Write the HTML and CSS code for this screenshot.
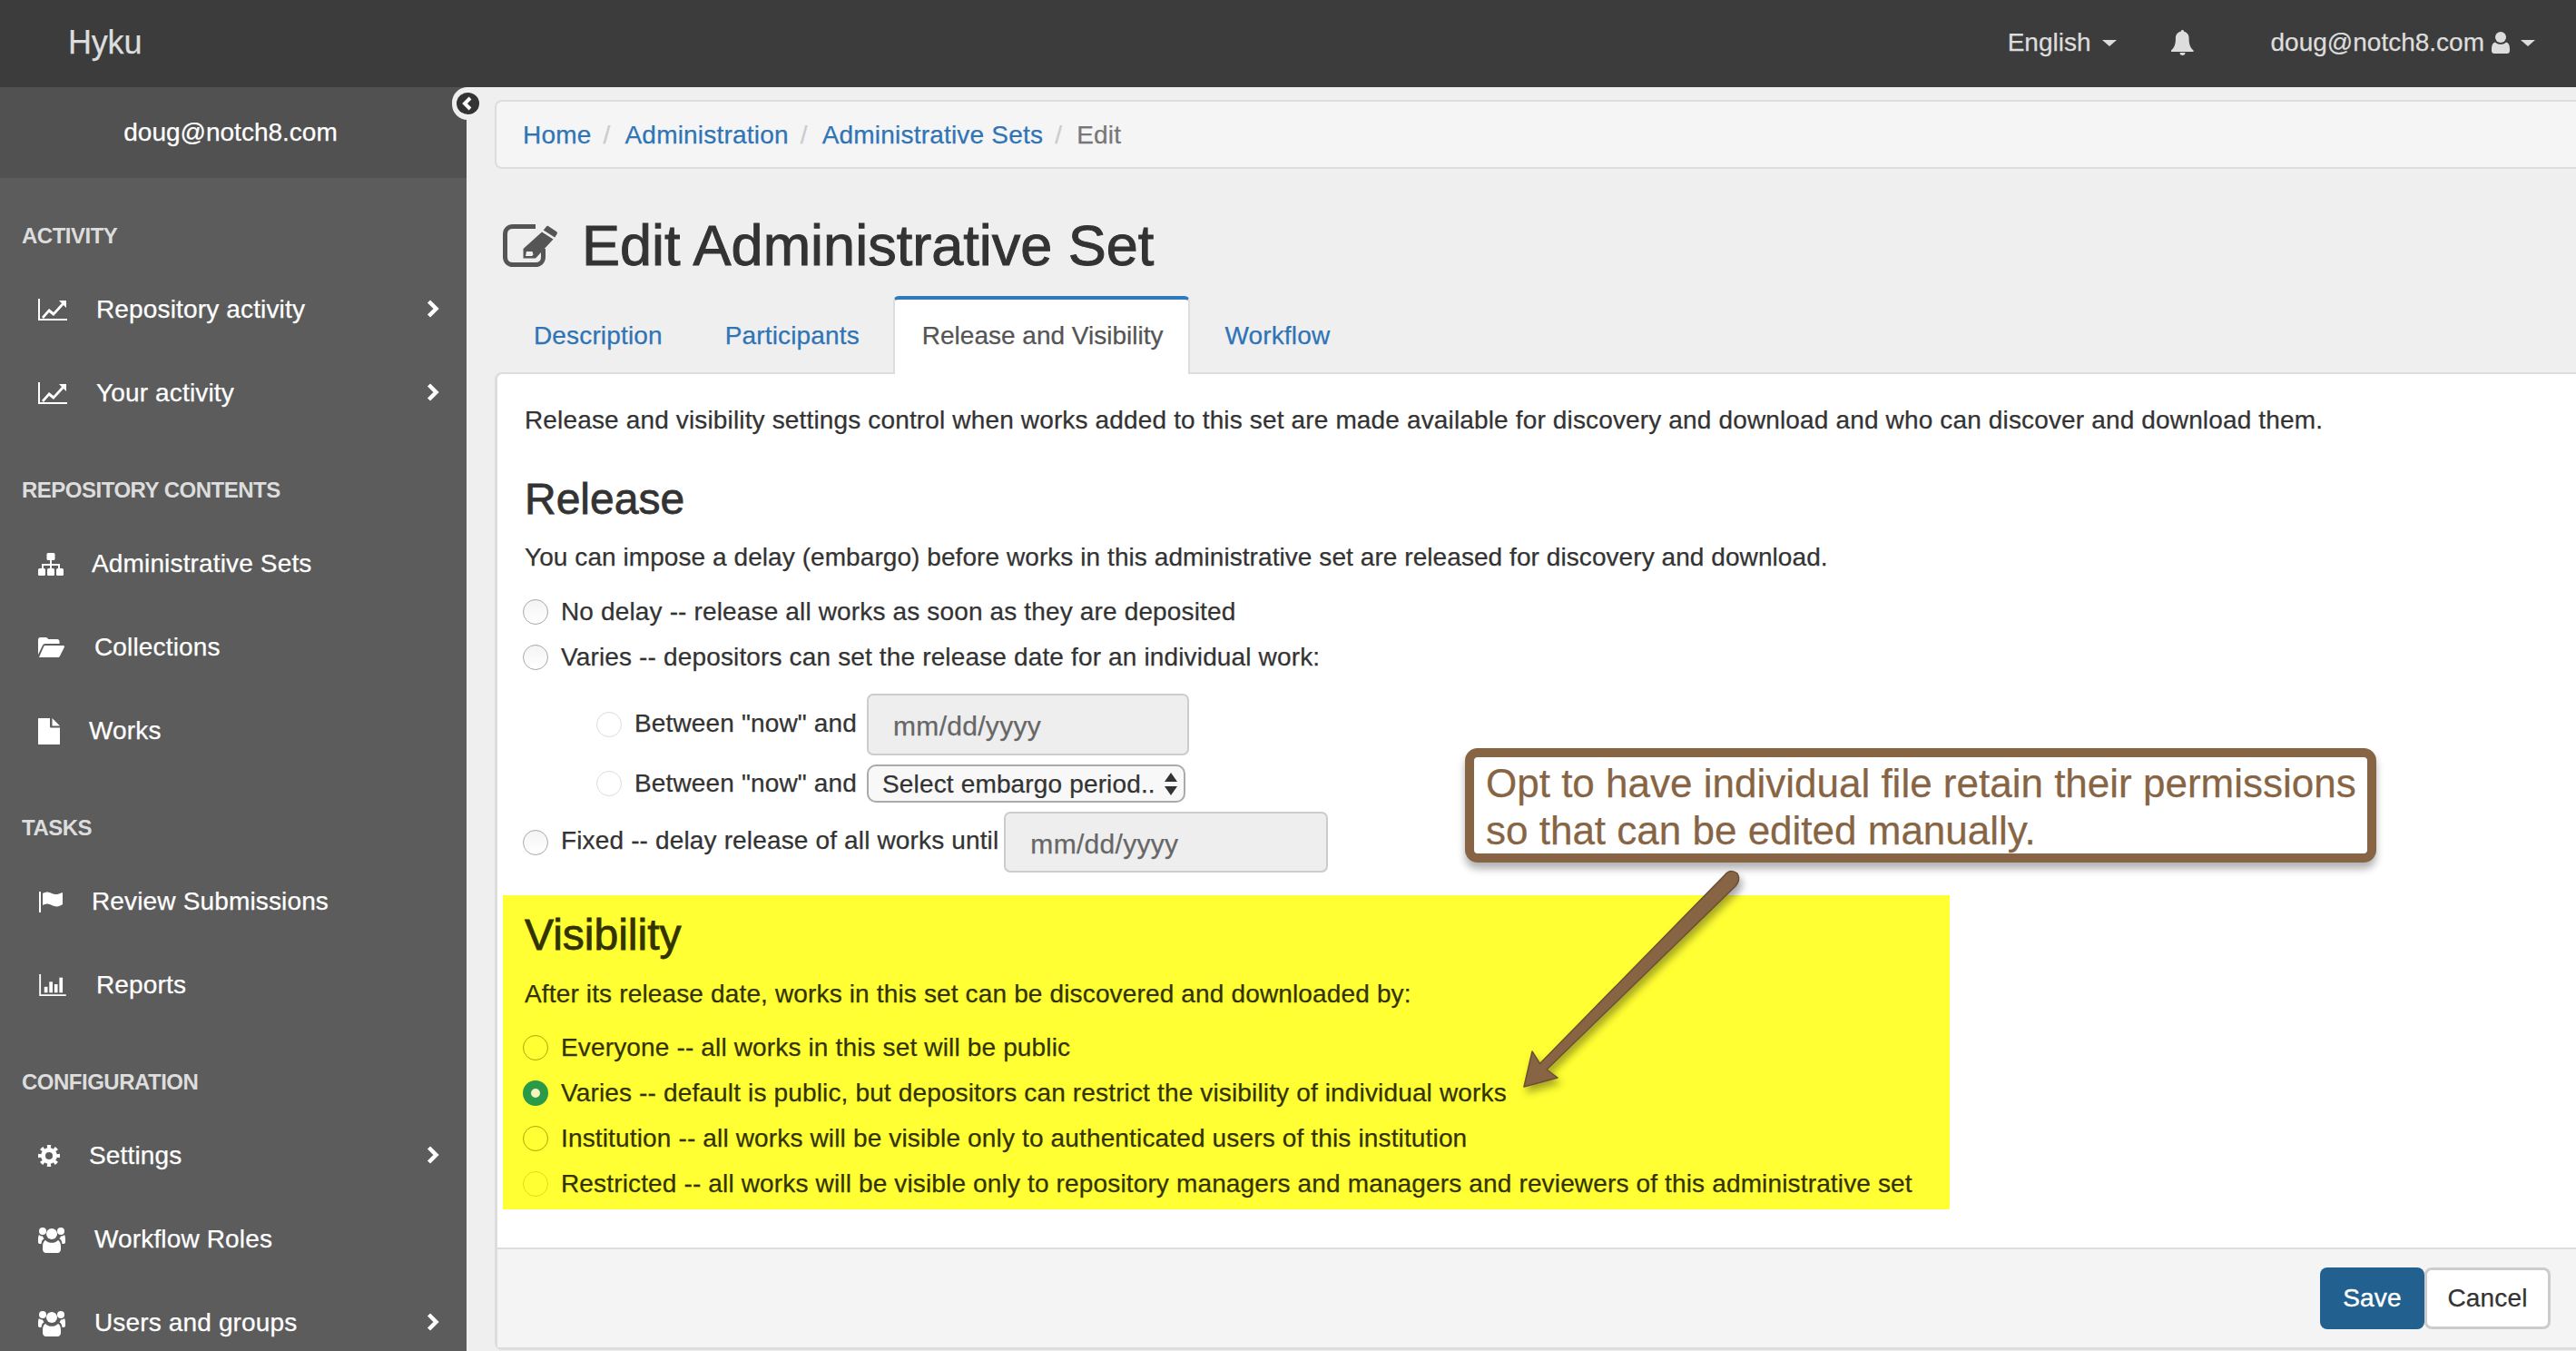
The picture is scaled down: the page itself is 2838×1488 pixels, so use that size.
FILE: index.html
```html
<!DOCTYPE html>
<html lang="en">
<head>
    <meta charset="UTF-8">
    <title>Edit Administrative Set</title>
    <link rel="stylesheet" href="styles.css">
</head>
<body>

    <header class="navbar">
        <a class="brand">Hyku</a>
        <nav class="nav-right">
            <span class="nav-lang">English <i class="caret"></i></span>
            <svg class="nav-bell" viewBox="0 0 25 28"><path d="M12.5 0c1 0 1.5.7 1.5 1.7 3.6.7 5.6 3.6 5.6 7.5 0 6 1.2 10 4.9 13.3.6.6.2 1.5-.6 1.5H.6c-.8 0-1.2-.9-.6-1.5 3.7-3.3 4.9-7.300 4.900-13.300 0-3.900 2-6.800 5.600-7.500C11 .7 11.500 0 12.500 0zM9.500 25h6c0 1.700-1.300 3-3 3s-3-1.300-3-3z"/></svg>
            <span class="nav-user">doug@notch8.com
                <svg class="nav-user-icon" viewBox="0 0 20 24"><circle cx="10" cy="6" r="6"/><path d="M4 11.500c1.500 1.500 3.500 2.300 6 2.300s4.500-.8 6-2.300c2.600.5 4 3 4 7.500v2c0 2-1.300 3-3 3H3c-1.700 0-3-1-3-3v-2c0-4.500 1.400-7 4-7.500z"/></svg>
                <i class="caret"></i>
            </span>
        </nav>
    </header>

    <div class="page">
        <aside class="sidebar">
            <div class="sidebar-user">doug@notch8.com</div>

            <h4 class="side-heading">ACTIVITY</h4>
            <a class="side-item">
                <svg class="ico ico-chart" viewBox="0 0 32 24"><path class="line" d="M1 0V23H32"/><path d="M4 20l8-9 5 4 9-10-3-3h8v8l-3-3-11 12-5-4-6 7z"/></svg>
                Repository activity
                <svg class="chev" viewBox="0 0 14 20"><path d="M2.500 2l8 8-8 8"/></svg>
            </a>
            <a class="side-item">
                <svg class="ico ico-chart" viewBox="0 0 32 24"><path class="line" d="M1 0V23H32"/><path d="M4 20l8-9 5 4 9-10-3-3h8v8l-3-3-11 12-5-4-6 7z"/></svg>
                Your activity
                <svg class="chev" viewBox="0 0 14 20"><path d="M2.500 2l8 8-8 8"/></svg>
            </a>

            <h4 class="side-heading">REPOSITORY CONTENTS</h4>
            <a class="side-item">
                <svg class="ico ico-sitemap" viewBox="0 0 28 25"><rect x="9.500" width="9" height="8" rx="1.500"/><path d="M13 8h2v4h9v5h-2v-3h-7v3h-2v-3H6v3H4v-5h9z"/><rect y="17" width="8" height="8" rx="1.500"/><rect x="10" y="17" width="8" height="8" rx="1.500"/><rect x="20" y="17" width="8" height="8" rx="1.500"/></svg>
                Administrative Sets
            </a>
            <a class="side-item">
                <svg class="ico ico-folder" viewBox="0 0 29 22"><path d="M0 2.500C0 1 1 0 2.500 0h6C10 0 11 1 11 2h10c1.500 0 2.500 1 2.500 2.500V7H8c-1.500 0-2.500.7-3 1.800L0 19z"/><path d="M8 9h19.500c1.200 0 1.800 1 1.300 2L24 20.500c-.5 1-1.500 1.500-2.500 1.500H1l5-11.500C6.400 9.500 7 9 8 9z"/></svg>
                Collections
            </a>
            <a class="side-item">
                <svg class="ico ico-file" viewBox="0 0 24 29"><path d="M1 0h12v9c0 1 .7 1.500 1.500 1.500H24V28c0 .6-.4 1-1 1H1c-.6 0-1-.4-1-1V1c0-.6.4-1 1-1z"/><path d="M15.500 0L24 8.500h-8.500z"/></svg>
                Works
            </a>

            <h4 class="side-heading">TASKS</h4>
            <a class="side-item">
                <svg class="ico ico-flag" viewBox="0 0 27 24"><rect x="1" y="1" width="2" height="23"/><path d="M5 3c3-2 6-2 10 0s7 1 12-1v13c-4 3-8 3-12 1s-7-2-10 0z"/></svg>
                Review Submissions
            </a>
            <a class="side-item">
                <svg class="ico ico-chart" viewBox="0 0 32 26"><path class="line" d="M1 0V25H32"/><rect x="6" y="15" width="4" height="7"/><rect x="12" y="9" width="4" height="13"/><rect x="18" y="12" width="4" height="10"/><rect x="24" y="4" width="4" height="18"/></svg>
                Reports
            </a>

            <h4 class="side-heading">CONFIGURATION</h4>
            <a class="side-item">
                <svg class="ico ico-cog" viewBox="0 0 24 24"><circle class="cog-ring" cx="12" cy="12" r="6.500"/><circle class="cog-teeth" cx="12" cy="12" r="10" pathLength="32" transform="rotate(-11.250 12 12)"/></svg>
                Settings
                <svg class="chev" viewBox="0 0 14 20"><path d="M2.500 2l8 8-8 8"/></svg>
            </a>
            <a class="side-item">
                <svg class="ico ico-users" viewBox="0 0 30 29"><circle cx="15" cy="8" r="6"/><circle cx="5" cy="5" r="4"/><circle cx="25" cy="5" r="4"/><path d="M8 15c2 2 4.500 2.800 7 2.800s5-.8 7-2.800c1.500.5 3 3 3 7v3c0 2-1.500 4-3.500 4h-13C6.500 29 5 27 5 25v-3c0-4 1.500-6.500 3-7z"/><path d="M1 9c1 1 2.500 1.500 4 1.500.2 1 .8 2 1.600 2.800C4.500 14.500 3.700 16.500 3.500 19H2c-1.200 0-2-.8-2-2v-3c0-2 .3-4 1-5z"/><path d="M29 9c-1 1-2.500 1.500-4 1.500-.2 1-.8 2-1.600 2.800 2.100 1.200 2.900 3.200 3.100 5.700H28c1.200 0 2-.8 2-2v-3c0-2-.3-4-1-5z"/></svg>
                Workflow Roles
            </a>
            <a class="side-item">
                <svg class="ico ico-users" viewBox="0 0 30 29"><circle cx="15" cy="8" r="6"/><circle cx="5" cy="5" r="4"/><circle cx="25" cy="5" r="4"/><path d="M8 15c2 2 4.500 2.800 7 2.800s5-.8 7-2.800c1.500.5 3 3 3 7v3c0 2-1.500 4-3.500 4h-13C6.500 29 5 27 5 25v-3c0-4 1.500-6.500 3-7z"/><path d="M1 9c1 1 2.500 1.500 4 1.500.2 1 .8 2 1.600 2.800C4.500 14.500 3.700 16.500 3.500 19H2c-1.200 0-2-.8-2-2v-3c0-2 .3-4 1-5z"/><path d="M29 9c-1 1-2.500 1.500-4 1.500-.2 1-.8 2-1.600 2.800 2.100 1.200 2.900 3.200 3.100 5.700H28c1.200 0 2-.8 2-2v-3c0-2-.3-4-1-5z"/></svg>
                Users and groups
                <svg class="chev" viewBox="0 0 14 20"><path d="M2.500 2l8 8-8 8"/></svg>
            </a>
        </aside>

        <main class="content">
            <ol class="breadcrumb">
                <li><a>Home</a></li>
                <li><a>Administration</a></li>
                <li><a>Administrative Sets</a></li>
                <li class="active">Edit</li>
            </ol>

            <h1 class="page-title">
                <svg class="title-icon" viewBox="0 0 61 47"><path class="title-box" d="M36 2.500H11C6 2.500 2.500 6 2.500 11v25c0 5 3.500 8.500 8.500 8.500h25c5 0 8.500-3.500 8.500-8.500V27"/><path d="M50 2l9 6c1 .7 1.200 1.800.6 2.700l-2.400 3.800-12.500-8L48 2.500c.5-.8 1.200-1 2-.5zM43 8.500l12.500 8L36 37.500H22.500V27zM26 30l-1 5h7l1.500-1.600-1-3.400z"/></svg>
                Edit Administrative Set
            </h1>

            <ul class="tabs">
                <li><a>Description</a></li>
                <li><a>Participants</a></li>
                <li class="active"><a>Release and Visibility</a></li>
                <li><a>Workflow</a></li>
            </ul>

            <section class="panel">
                <div class="panel-body">
                    <p class="intro">Release and visibility settings control when works added to this set are made available for discovery and download and who can discover and download them.</p>

                    <h2 class="sub-title">Release</h2>
                    <p class="lead">You can impose a delay (embargo) before works in this administrative set are released for discovery and download.</p>

                    <label class="radio-row"><input type="radio" name="release"> No delay -- release all works as soon as they are deposited</label>
                    <label class="radio-row"><input type="radio" name="release"> Varies -- depositors can set the release date for an individual work:</label>

                    <div class="embargo-row embargo-date">
                        <input type="radio" name="varies" disabled>
                        <span class="embargo-label">Between "now" and</span>
                        <input class="date-input" type="text" placeholder="mm/dd/yyyy" disabled>
                    </div>
                    <div class="embargo-row embargo-period">
                        <input type="radio" name="varies" disabled>
                        <span class="embargo-label">Between "now" and</span>
                        <span class="select-wrap">
                            <select disabled><option>Select embargo period..</option></select>
                        </span>
                    </div>
                    <div class="fixed-row">
                        <input type="radio" name="release">
                        <span class="fixed-label">Fixed -- delay release of all works until</span>
                        <input class="date-input" type="text" placeholder="mm/dd/yyyy" disabled>
                    </div>

                    <div class="visibility">
                        <h2 class="sub-title">Visibility</h2>
                        <p class="lead">After its release date, works in this set can be discovered and downloaded by:</p>
                        <label class="radio-row"><input type="radio" name="vis"> Everyone -- all works in this set will be public</label>
                        <label class="radio-row"><input type="radio" name="vis" checked> Varies -- default is public, but depositors can restrict the visibility of individual works</label>
                        <label class="radio-row"><input type="radio" name="vis"> Institution -- all works will be visible only to authenticated users of this institution</label>
                        <label class="radio-row"><input type="radio" name="vis" disabled> Restricted -- all works will be visible only to repository managers and managers and reviewers of this administrative set</label>
                    </div>
                </div>
                <div class="panel-footer">
                    <button class="btn btn-primary">Save</button>
                    <button class="btn btn-default">Cancel</button>
                </div>
            </section>
        </main>
    </div>

    <!-- things lying over the page -->
    <div class="collapse-tab">
        <span class="collapse-dot">
            <svg viewBox="0 0 24 24"><path d="M14.500 6l-6 6 6 6"/></svg>
        </span>
    </div>

    <div class="callout">Opt to have individual file retain their permissions<br>so that can be edited manually.</div>

    <svg class="callout-arrow" viewBox="1660 950 270 260">
        <path d="M1900 964Q1906 956 1914 962Q1918 969 1912 976L1704 1178L1716 1187L1679 1197L1688 1158L1696.500 1171.500Z"/>
    </svg>

</body>
</html>
```

FILE: styles.css
```css
* {
    box-sizing: border-box;
}
html, body {
    margin: 0;
    height: 1488px;
    overflow: hidden;
}
body {
    position: relative;
    font-family: "Liberation Sans", Arial, sans-serif;
    font-size: 28px;
    color: #333;
    background: #efefef;
    -webkit-text-stroke: 0.25px currentColor;
}
a {
    color: #2f74b5;
    text-decoration: none;
}

/* top bar */
.navbar {
    height: 96px;
    background: #3c3c3c;
    color: #ddd;
    display: flex;
    align-items: center;
    justify-content: space-between;
    padding: 0 45px 2px 75px;
}
.brand {
    font-size: 36px;
    color: #ddd;
    letter-spacing: -0.2px;
}
.nav-right {
    display: flex;
    align-items: center;
}
.nav-lang, .nav-user {
    display: flex;
    align-items: center;
}
.caret {
    display: inline-block;
    width: 0;
    height: 0;
    border-top: 7px solid #ddd;
    border-left: 8px solid transparent;
    border-right: 8px solid transparent;
    margin-left: 12px;
}
.nav-bell {
    width: 25px;
    height: 28px;
    fill: #ddd;
    margin: 0 85px 0 60px;
}
.nav-user-icon {
    width: 20px;
    height: 24px;
    fill: #ddd;
    margin-left: 8px;
}

/* sidebar */
.page {
    display: flex;
    height: 1392px;
}
.sidebar {
    width: 514px;
    flex: none;
    background: #5c5c5c;
    overflow: hidden;
}
.sidebar-user {
    height: 100px;
    background: #515151;
    color: #fff;
    display: flex;
    align-items: center;
    justify-content: center;
    padding-right: 6px;
}
.side-heading {
    margin: 47px 0 19px 24px;
    font-size: 24px;
    line-height: 30px;
    font-weight: bold;
    color: #ddd;
    letter-spacing: -0.5px;
    -webkit-text-stroke: 0;
}
.sidebar-user + .side-heading {
    margin-top: 49px;
}
.side-item {
    height: 92px;
    display: flex;
    align-items: center;
    padding: 2px 0 0 42px;
    color: #fff;
    position: relative;
    letter-spacing: 0.15px;
}
.ico {
    fill: #fff;
    flex: none;
    margin-right: 32px;
}
.ico .line {
    fill: none;
    stroke: #fff;
    stroke-width: 2;
}
.ico-chart { width: 32px; height: 24px; }
.ico-sitemap { width: 28px; height: 25px; margin-right: 31px; }
.ico-folder { width: 29px; height: 22px; margin-right: 33px; }
.ico-file { width: 24px; height: 29px; }
.ico-flag { width: 27px; height: 24px; }
.ico-cog { width: 24px; height: 24px; }
.ico-users { width: 30px; height: 29px; }
.cog-ring {
    fill: none;
    stroke: #fff;
    stroke-width: 5;
}
.cog-teeth {
    fill: none;
    stroke: #fff;
    stroke-width: 4;
    stroke-dasharray: 2 2;
}
.chev {
    position: absolute;
    left: 470px;
    top: 36px;
    width: 14px;
    height: 20px;
    fill: none;
    stroke: #fff;
    stroke-width: 4.500;
}

/* main column */
.content {
    flex: 1;
    min-width: 0;
    padding-left: 31px;
    display: flex;
    flex-direction: column;
    letter-spacing: 0.15px;
}
.breadcrumb {
    list-style: none;
    margin: 14px 0 0;
    height: 76px;
    padding: 2px 0 0 29px;
    display: flex;
    align-items: center;
    background: #f5f5f5;
    border: 2px solid #ddd;
    border-right: 0;
    border-radius: 8px 0 0 8px;
    letter-spacing: 0.2px;
}
.breadcrumb li + li::before {
    content: "/";
    color: #ccc;
    padding: 0 16px 0 13px;
}
.breadcrumb .active {
    color: #777;
}
.page-title {
    margin: 48px 0 0 9px;
    height: 72px;
    display: flex;
    align-items: center;
    font-size: 63px;
    font-weight: normal;
    letter-spacing: 0;
    -webkit-text-stroke: 1px #333;
    white-space: nowrap;
}
.title-icon {
    width: 61px;
    height: 47px;
    fill: #555;
    margin-right: 26px;
}
.title-box {
    fill: none;
    stroke: #555;
    stroke-width: 5;
}
.tabs {
    list-style: none;
    margin: 20px 0 -2px 12px;
    padding: 0;
    height: 86px;
    display: flex;
    gap: 7px;
    position: relative;
    z-index: 1;
}
.tabs a {
    display: block;
    height: 86px;
    line-height: 88px;
    padding: 0 29px;
    border: 2px solid transparent;
    border-width: 0 2px;
}
.tabs .active {
    margin-left: -1px;
}
.tabs .active a {
    color: #555;
    background: #fff;
    line-height: 80px;
    letter-spacing: 0;
    padding: 0 28px 0 30px;
    border-color: #ddd;
    border-top: 4px solid #2f7abd;
    border-radius: 6px 6px 0 0;
}
.panel {
    flex: 1;
    display: flex;
    flex-direction: column;
    margin-bottom: 1px;
    background: #fff;
    border: solid #ddd;
    border-width: 2px 0 3px 3px;
    border-radius: 8px 0 0 8px;
    min-height: 0;
}
.panel-body {
    flex: 1;
    padding: 31px 0 0 30px;
    min-height: 0;
}
.intro, .lead {
    margin: 0;
    line-height: 40px;
}
.panel-body > .lead {
    letter-spacing: 0.07px;
}
.sub-title {
    margin: 37px 0 14px;
    font-size: 48px;
    line-height: 60px;
    font-weight: normal;
    letter-spacing: 0;
    -webkit-text-stroke: 0.8px currentColor;
}
.radio-row {
    display: flex;
    align-items: center;
    height: 50px;
    white-space: nowrap;
}
.lead + .radio-row {
    margin-top: 15px;
}
input[type="radio"] {
    appearance: none;
    width: 28px;
    height: 28px;
    margin: 0 14px 0 -2px;
    flex: none;
    border-radius: 50%;
    border: 1.500px solid #a9a9a9;
    background: linear-gradient(#f4f4f4, #fff);
}
input[type="radio"]:disabled {
    border-color: #dcdcdc;
    background: #fff;
}
.embargo-row, .fixed-row {
    display: flex;
    align-items: center;
    white-space: nowrap;
}
.embargo-row {
    padding-left: 81px;
}
.embargo-date {
    margin-top: 15px;
    height: 68px;
}
.embargo-date .embargo-label, .fixed-label {
    padding-bottom: 3px;
}
.embargo-period {
    margin-top: 10px;
    height: 42px;
}
.fixed-row {
    margin-top: 10px;
    height: 67px;
}
.embargo-label {
    margin-right: 11px;
}
.fixed-label {
    margin-right: 6px;
}
.date-input {
    width: 355px;
    height: 100%;
    padding: 4px 26px 0 27px;
    font: inherit;
    font-size: 30px;
    letter-spacing: 0.3px;
    background: #eee;
    border: 2px solid #ccc;
    border-radius: 7px;
}
.date-input::placeholder {
    color: #666;
    opacity: 1;
}
.fixed-row .date-input {
    width: 357px;
}
.select-wrap {
    position: relative;
    display: block;
    width: 351px;
    height: 42px;
}
.select-wrap::before, .select-wrap::after {
    content: "";
    position: absolute;
    right: 9px;
    border-left: 7px solid transparent;
    border-right: 7px solid transparent;
}
.select-wrap::before {
    top: 9px;
    border-bottom: 10px solid #333;
}
.select-wrap::after {
    bottom: 8px;
    border-top: 10px solid #333;
}
.select-wrap select {
    appearance: none;
    width: 100%;
    height: 100%;
    padding: 0 0 0 15px;
    font: inherit;
    letter-spacing: inherit;
    color: #333;
    opacity: 1;
    background: #f8f8f8;
    border: 2px solid #aaa;
    border-radius: 10px;
}

/* yellow highlight, the grey of the form multiplies into olive here */
.visibility {
    width: 1594px;
    margin: 25px 0 0 -24px;
    padding: 14px 0 3px 24px;
    background: #ffff33;
    color: #333300;
}
.visibility .sub-title {
    margin: 0 0 15px;
}
.visibility .lead + .radio-row {
    margin-top: 14px;
}
.visibility input[type="radio"] {
    background: transparent;
    border-color: #a8a800;
}
.visibility input[type="radio"]:disabled {
    border-color: #dede10;
}
.visibility input[type="radio"]:checked {
    border: 9px solid #2a9a48;
    background: #f4f4c0;
}

.panel-footer {
    height: 110px;
    flex: none;
    display: flex;
    justify-content: flex-end;
    align-items: flex-start;
    padding: 20px 28px 0 0;
    background: #f4f4f4;
    border-top: 2px solid #ddd;
}
.btn {
    height: 68px;
    padding: 0;
    font: inherit;
    letter-spacing: inherit;
    border-radius: 8px;
}
.btn-primary {
    width: 115px;
    color: #fff;
    background: #22608f;
    border: 0;
    -webkit-text-stroke: 0.4px #fff;
}
.btn-default {
    width: 139px;
    color: #333;
    background: #fff;
    border: 3px solid #ccc;
}

/* overlays */
.collapse-tab {
    position: absolute;
    left: 498px;
    top: 96px;
    width: 34px;
    height: 36px;
    background: #efefef;
    border-radius: 18px 0 18px 18px;
    display: flex;
    align-items: center;
    padding-left: 5px;
}
.collapse-dot {
    width: 25px;
    height: 24px;
    border-radius: 50%;
    background: #333;
    display: block;
}
.collapse-dot svg {
    display: block;
    width: 25px;
    height: 24px;
    fill: none;
    stroke: #fff;
    stroke-width: 4;
}
.callout {
    position: absolute;
    left: 1614px;
    top: 824px;
    width: 1004px;
    height: 126px;
    padding: 3px 0 0 13px;
    background: #fff;
    border: 10px solid #876544;
    border-radius: 14px;
    box-shadow: 0 7px 8px rgba(0, 0, 0, 0.3);
    color: #876544;
    font-size: 44px;
    line-height: 52px;
    white-space: nowrap;
}
.callout-arrow {
    position: absolute;
    left: 1660px;
    top: 950px;
    width: 270px;
    height: 260px;
    fill: #876544;
    stroke: #6b4f35;
    stroke-width: 1.500;
    stroke-linejoin: round;
    filter: drop-shadow(3px 6px 4px rgba(0, 0, 0, 0.35));
}
```
